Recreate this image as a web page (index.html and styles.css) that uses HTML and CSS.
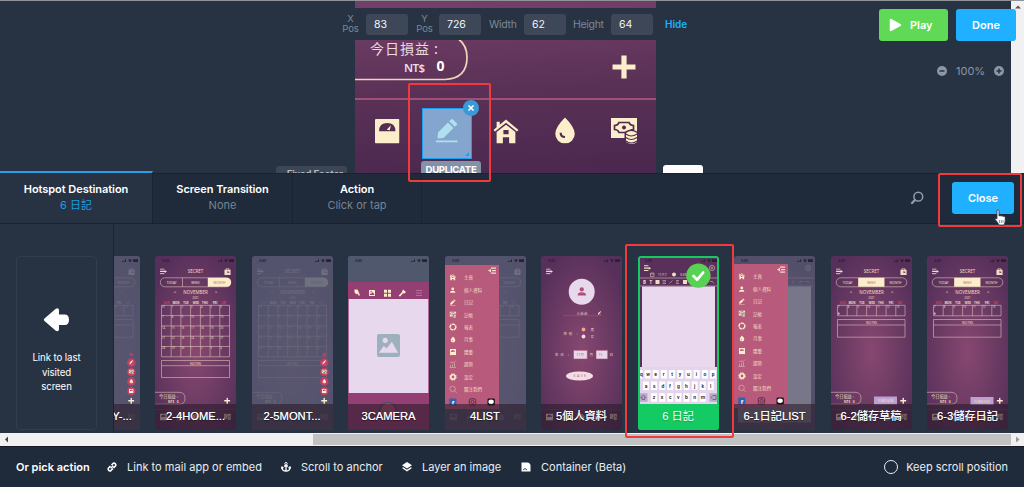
FILE: index.html
```html
<!DOCTYPE html>
<html lang="zh-Hant">
<head>
<meta charset="utf-8">
<title>Hotspot editor</title>
<link rel="stylesheet" href="styles.css">
</head>
<body>
<svg class="defs" width="0" height="0">
  <defs>
    <radialGradient id="plum" cx=".5" cy=".55" r=".62"><stop offset="0" stop-color="#874870"/><stop offset="1" stop-color="#56305a"/></radialGradient>
    <symbol id="i-plus" viewBox="0 0 24 24"><path d="M9.500 1h5v8.500H23v5h-8.500V23h-5v-8.500H1v-5h8.500z"/></symbol>
    <symbol id="i-scale" viewBox="0 0 24 24"><path fill-rule="evenodd" d="M1 0h22q1 0 1 1v22q0 1-1 1H1q-1 0-1-1V1q0-1 1-1zM4 12h16q0-8-8-8t-8 8zM11.500 10.500l4-4.500-1 5z"/></symbol>
    <symbol id="i-pencil" viewBox="0 0 24 24"><path d="M2.500 20l.5-6L13 4l5.500 5.500L8.500 19.500zM14.200 2.800L16 1q1-1 2 0l3.700 3.700q1 1 0 2L19.700 8.300zM1 22h21.500v2H1z"/></symbol>
    <symbol id="i-home" viewBox="0 0 24 24"><path fill-rule="evenodd" d="M3 3h3v3l6-5 12 10-1.500 1.500L12 4 1.500 12.500 0 11l3-2.500zM12 6l9 7v11h-6v-6H9v6H3V13zM9.500 11v4h5v-4z"/></symbol>
    <symbol id="i-drop" viewBox="0 0 24 24"><path fill-rule="evenodd" d="M12 0q9 9 9 15a9 9 0 0 1-18 0Q3 9 12 0zM7 14q0 5 5 5v-2q-3 0-3-3z"/></symbol>
    <symbol id="i-cash" viewBox="0 0 27 26"><path d="M0 0h26v20H0z"/><path d="M8 4.500h10q1 3 4.500 3v4q-3.500 0-4.500 3H8q-1-3-4.500-3v-4q3.500 0 4.500-3z" fill="none" stroke="#50294f" stroke-width="1.700"/><circle cx="13" cy="9.500" r="2" fill="#50294f"/><path d="M13.500 14q6-5 13.500 0v7H13.500z" fill="#50294f"/><path d="M15 15q5-4 11 0v9q-5 4-11 0z"/><path d="M15 16q5 4 11 0M15 19.500q5 4 11 0M15 23q5 4 11 0" fill="none" stroke="#50294f" stroke-width="1.200"/></symbol>
    <symbol id="i-menu" viewBox="0 0 16 14"><path d="M0 0h10v2.500H0zM0 5.500h11v2.500H0zM0 11h10v2.500H0zM11 3.500l5 3.500-5 3.500z"/></symbol>
    <symbol id="i-lock" viewBox="0 0 16 16"><path fill-rule="evenodd" d="M1 4h3V1h8v3h3v12H1zM6 2.500V4h4V2.500zM8 7v5l5-2.500z"/></symbol>
    <symbol id="i-person" viewBox="0 0 24 24"><circle cx="12" cy="6" r="6"/><path d="M0 23q0-9 12-9t12 9z"/></symbol>
    <symbol id="i-image" viewBox="0 0 24 24"><path fill-rule="evenodd" d="M2 0h20q2 0 2 2v20q0 2-2 2H2q-2 0-2-2V2q0-2 2-2zM8.500 4a2.800 2.800 0 1 0 .1 0zM2 19.500h20L15.500 8 10 15l-3-2.500z"/></symbol>

    <symbol id="status" viewBox="0 0 81 10"><g class="ink"><text x="7" y="6.300" class="t35">3:03</text><path d="M63 6V5h1v1zM64.500 6V4.500h1V6zM66 6V3.500h1V6zM69 3.500h4l-2 3zM74 3.300h5v2.700h-5z"/></g></symbol>

    <symbol id="header" viewBox="0 0 81 50">
      <use href="#i-menu" x="5" y="12.500" width="7" height="6"/>
      <text x="40.500" y="17.300" class="t45 mid">SECRET</text>
      <use href="#i-lock" x="69" y="12" width="7" height="7"/>
      <rect x="5.300" y="21.800" width="70.500" height="9" rx="4.500" class="line"/>
      <path class="line" d="M27.500 21.800v9M53 21.800v9"/>
      <text x="16.500" y="27.600" class="t32 mid">TODAY</text><text x="40.500" y="27.600" class="t32 mid">WEEK</text><text x="64.500" y="27.600" class="t32 mid">MONTH</text>
      <text x="20" y="38" class="t45 mid">&lt;</text><text x="40.500" y="38.200" class="t45 mid">NOVEMBER</text><text x="61" y="38" class="t45 mid">&gt;</text>
      <text x="40.500" y="42.500" class="t28 mid">2021</text>
      <g class="t25 bold mid"><text x="11.500" y="48" class="red">SUN</text><text x="21" y="48">MON</text><text x="31" y="48">TUE</text><text x="41" y="48">WED</text><text x="50" y="48">THU</text><text x="60" y="48">FRI</text><text x="69" y="48" class="red">SAT</text></g>
    </symbol>
    <symbol id="tail" viewBox="0 0 81 174">
      <path class="line" d="M0 136.300h24q6 0 6 6t-6 6H0"/>
      <text x="4" y="142" class="t42">今日損益 :</text><text x="13" y="146.600" class="t32 bold">NT$&#160;&#160; 0</text>
      <path d="M0 153.500h81" stroke="#8d416a" stroke-width=".6"/>
      <use href="#i-scale" x="5" y="157.500" width="7" height="7"/><use href="#i-pencil" x="21" y="157.500" width="7" height="7"/><use href="#i-home" x="37" y="157.500" width="7" height="7"/><use href="#i-drop" x="53" y="157.500" width="7" height="7"/><use href="#i-cash" x="69" y="157.500" width="7" height="7"/>
    </symbol>
    <symbol id="month" viewBox="0 0 81 174">
      <use href="#header" width="81" height="50"/>
      <path d="M53 21.800h18.500q4.500 0 4.500 4.500t-4.500 4.500H53z" class="on"/><text x="64.500" y="27.600" class="t32 mid pink">MONTH</text>
      <path class="line" d="M6.500 49.300h68v51.500h-68zM6.500 59.600h68M6.500 69.900h68M6.500 80.200h68M6.500 90.500h68M16.200 49.300v51.500M25.900 49.300v51.500M35.600 49.300v51.500M45.400 49.300v51.500M55.100 49.300v51.500M64.800 49.300v51.500M6.500 104.500h68v17h-68zM6.500 109.700h68"/>
      <g class="day"><text x="7" y="52">31</text><text x="16.700" y="52">1</text><text x="26.400" y="52">2</text><text x="36.100" y="52">3</text><text x="45.900" y="52">4</text><text x="55.600" y="52">5</text><text x="65.300" y="52">6</text>
      <text x="7" y="62.300">7</text><text x="16.700" y="62.300">8</text><text x="26.400" y="62.300">9</text><text x="36.100" y="62.300">10</text><text x="45.900" y="62.300">11</text><text x="55.600" y="62.300">12</text><text x="65.300" y="62.300">13</text>
      <text x="7" y="72.600">14</text><text x="16.700" y="72.600">15</text><text x="26.400" y="72.600">16</text><text x="36.100" y="72.600">17</text><text x="45.900" y="72.600">18</text><text x="55.600" y="72.600">19</text><text x="65.300" y="72.600">20</text>
      <text x="7" y="82.900">21</text><text x="16.700" y="82.900">22</text><text x="26.400" y="82.900">23</text><text x="36.100" y="82.900">24</text><text x="45.900" y="82.900">25</text><text x="55.600" y="82.900">26</text><text x="65.300" y="82.900">27</text>
      <text x="7" y="93.200">28</text><text x="16.700" y="93.200">29</text><text x="26.400" y="93.200">30</text><text x="36.100" y="93.200">1</text><text x="45.900" y="93.200">2</text><text x="55.600" y="93.200">3</text><text x="65.300" y="93.200">4</text></g>
      <text x="40.500" y="108.600" class="t35 mid">NOTES</text>
      <use href="#tail" width="81" height="174"/>
    </symbol>
    <symbol id="week" viewBox="0 0 81 174">
      <use href="#header" width="81" height="50"/>
      <path d="M27.300 21.800h26v9h-26z" class="on"/><text x="40.500" y="27.600" class="t32 mid pink">WEEK</text>
      <path class="line" d="M6.500 49.300h67.500v10.500h-67.500zM16.200 49.300v10.500M25.900 49.300v10.500M35.600 49.300v10.500M45.400 49.300v10.500M55.100 49.300v10.500M64.800 49.300v10.500M6.500 63.500h67.500v17.700h-67.500zM6.500 69h67.500"/>
      <g class="day"><text x="7" y="52.300">7</text><text x="16.700" y="52.300">8</text><text x="26.400" y="52.300">9</text><text x="36.100" y="52.300">10</text><text x="45.900" y="52.300">11</text><text x="55.600" y="52.300">12</text><text x="65.300" y="52.300">13</text></g>
      <path d="M7.300 56l1.700 1.700-1.700 1.200z"/>
      <text x="40.500" y="67.600" class="t35 mid">NOTES</text>
      <use href="#tail" width="81" height="174"/>
    </symbol>
    <symbol id="fabs" viewBox="0 0 81 174">
      <circle cx="72.300" cy="98.500" r="2" fill="#a84468"/>
      <g fill="#c13f64"><circle cx="72.300" cy="106.500" r="4.300"/><circle cx="72.300" cy="116" r="4.300"/><circle cx="72.300" cy="125.500" r="4.300"/><circle cx="72.300" cy="135" r="4.300"/></g>
      <g class="cream"><use href="#i-pencil" x="70" y="104" width="4.600" height="4.600"/><use href="#i-cash" x="69.500" y="113.500" width="5.500" height="5"/><use href="#i-drop" x="70" y="123" width="4.600" height="4.600"/><use href="#i-scale" x="70" y="132.700" width="4.600" height="4.600"/>
      <use href="#i-plus" x="69" y="141.500" width="6.500" height="6.500"/></g>
    </symbol>
    <symbol id="menu" viewBox="0 0 81 174">
      <path d="M0 9h54v144H0z" fill="#b85a7c"/>
      <path d="M46 11.500h5v1.300h-5zM47 14h4v1.300h-4zM46 16.500h5v1.300h-5zM43 14.600l3-1.800v3.600z"/>
      <g class="cream"><use href="#i-home" x="4.500" y="18" width="6.500" height="6.500"/><use href="#i-person" x="5" y="31" width="5.500" height="6.500"/><use href="#i-pencil" x="4.500" y="43.300" width="6.500" height="6.500"/><use href="#i-cash" x="4.500" y="55.500" width="7" height="6.500"/>
      <use href="#i-drop" x="5" y="80.200" width="6" height="6.500"/><use href="#i-scale" x="4.800" y="93" width="6.200" height="6.200"/></g>
      <circle cx="8" cy="71" r="2.900" fill="none" stroke="#fdeecb" stroke-width="1.400" stroke-dasharray="3.500 .5"/>
      <path d="M4.500 111.500h6.500M5.500 111v-2M7.500 111v-3M9.500 111v-4M5 107l2-1 2 .5 2-2" class="line"/>
      <circle cx="8" cy="121" r="2.200" fill="none" stroke="#fdeecb" stroke-width="1.600"/><circle cx="8" cy="121" r="3.300" fill="none" stroke="#fdeecb" stroke-width="1" stroke-dasharray="1.300 1.300"/>
      <path d="M9.600 134.800l2 2" class="line"/><circle cx="7.600" cy="132.800" r="2.700" class="line"/>
      <g class="t45"><text x="19" y="23.200">主頁</text><text x="19" y="35.700">個人資料</text><text x="19" y="48.200">日記</text><text x="19" y="60.500">記帳</text><text x="19" y="73">報表</text><text x="19" y="85.400">月事</text><text x="19" y="98">體重</text><text x="19" y="110.400">趨勢</text><text x="19" y="123">設定</text><text x="19" y="135.300">關注我們</text></g>
      <rect x="4.300" y="142.500" width="7" height="7" fill="#2d63b4"/><text x="6.700" y="148.500" class="t6 white">f</text>
      <rect x="24.300" y="142.800" width="6.400" height="6.400" rx="1.600" fill="none" stroke="#532844" stroke-width=".9"/><circle cx="27.500" cy="146" r="1.600" fill="none" stroke="#532844" stroke-width=".8"/>
      <rect x="42.500" y="142.500" width="7.300" height="7" rx="1.200" fill="#121113"/><ellipse cx="46.100" cy="145.800" rx="2.700" ry="2.200" fill="#fff"/>
    </symbol>
    <symbol id="editor" viewBox="0 0 81 174">
      <use href="#i-menu" x="6" y="9" width="7" height="6.500"/>
      <circle cx="74" cy="12" r="2.700" class="line"/><circle cx="74" cy="12" r="1" class="line"/>
      <path class="line" d="M12.500 17h3.500v3.500h-3.500zM12.500 18h3.500"/><text x="20" y="20" class="t32">11/17</text><circle cx="36" cy="18.500" r="2"/><text x="42" y="20" class="t32">3:03</text>
      <path class="line" d="M2 22h77M2 30h77"/>
      <g class="t45 bold"><text x="5" y="27.700">B</text><text x="11.500" y="27.700">T</text></g><rect x="17.500" y="24" width="4" height="4"/><path class="line" d="M24.500 24.500h3.500M24.500 26h3.500M24.500 27.500h3.500M31.500 27.500l3-3M38 24.500h3M38 26h2.500M38 27.500h3M59 24.500v3M65 27.500q1-3 4-2M76 27.500q-1-3-4-2"/><rect x="45" y="24" width="4" height="4"/>
    </symbol>
    <symbol id="veil" viewBox="0 0 81 174"><path d="M0 0h81v174H0z" fill="#525970" opacity=".84"/></symbol>
  </defs>
</svg>

<div class="app">
  <section class="stage">
    <div class="pane-left"><button class="footer-btn">+Fixed Footer</button></div>
    <svg class="phone" viewBox="355 0 301 173" width="301" height="173">
      <defs><linearGradient id="screen" x1=".6" y1="0" x2=".7" y2="1"><stop offset="0" stop-color="#733f68"/><stop offset=".5" stop-color="#5a3156"/><stop offset="1" stop-color="#4b284f"/></linearGradient></defs>
      <path d="M355 0h301v173H355z" fill="url(#screen)"/>
      <path d="M355 79.500h90q22-1 22-22 0-12-8-18" fill="none" stroke="#ead7b9" stroke-width="1.700"/>
      <text x="370" y="54" class="profit" textLength="68">今日損益 :</text>
      <text x="404" y="71.500" class="cash" textLength="21">NT$</text><text x="436.500" y="70.500" class="zero">0</text>
      <path d="M355 99h301" stroke="#a14e79" stroke-width="2"/>
      <g class="cream"><use href="#i-plus" x="611" y="54.500" width="26" height="25"/><use href="#i-scale" x="375" y="119" width="24.500" height="24.500"/><use href="#i-home" x="492.500" y="118.500" width="27" height="25"/><use href="#i-drop" x="551.500" y="117.500" width="27" height="26"/><use href="#i-cash" x="611" y="118" width="27" height="26"/></g>
    </svg>
    <div class="pane-right"><div class="white-btn"></div></div>
    <div class="vscroll"><svg width="13" height="13"><path d="M4 8.500L7 5.500l3 3z" fill="#555"/></svg></div>
    <div class="toolbar">
      <span class="pos">X<br>Pos</span><span class="field">83</span>
      <span class="pos py">Y<br>Pos</span><span class="field">726</span>
      <span class="dim dw">Width</span><span class="field">62</span>
      <span class="dim dh">Height</span><span class="field">64</span>
      <span class="hide">Hide</span>
    </div>
    <div class="hotspot"><svg width="24" height="26" viewBox="0 0 24 25"><use href="#i-pencil" width="24" height="24" fill="#b2dff0"/></svg><span class="x"><svg width="8" height="8"><path d="M1.500 1.500l5 5M6.500 1.500l-5 5" stroke="#fff" stroke-width="1.700"/></svg></span><i class="grip"></i></div>
    <div class="duplicate">DUPLICATE</div>
    <div class="actions"><button class="btn play"><svg width="13" height="14"><path d="M1.500 1.500v11L11.500 7z" fill="#fff" stroke="#fff" stroke-width="1.500" stroke-linejoin="round"/></svg>Play</button><button class="btn">Done</button></div>
    <div class="zoom"><svg width="10" height="10"><circle cx="5" cy="5" r="5"/><path d="M2.500 5h5" class="cut"/></svg>100%<svg width="10" height="10"><circle cx="5" cy="5" r="5"/><path d="M2.500 5h5M5 2.500v5" class="cut"/></svg></div>
  </section>

  <nav class="tabs">
    <div class="tab active"><b>Hotspot Destination</b><span>6 日記</span></div>
    <div class="tab second"><b>Screen Transition</b><span>None</span></div>
    <div class="tab third"><b>Action</b><span>Click or tap</span></div>
    <svg class="search" width="14" height="14"><circle cx="8.300" cy="5.700" r="4.400" fill="none" stroke="#929daf" stroke-width="1.500"/><path d="M5 9l-3 3" stroke="#929daf" stroke-width="2.300" stroke-linecap="round"/></svg>
    <button class="btn close">Close</button>
  </nav>

  <main class="strip">
    <aside class="last"><div class="last-card"><svg width="27" height="26"><path d="M1.500 11.500L12.500 2q3-2 3.500 1v4.500h5.500q4.500 0 4.500 5.300t-4.500 5.200H16v4.500q-.5 3-3.500 1L1.500 14q-1.500-1.200 0-2.500z" fill="#fff"/></svg><p>Link to last<br>visited<br>screen</p></div></aside>
    <div class="thumbs">
      <figure class="thumb"><svg viewBox="0 0 81 174"><path d="M0 0h81v174H0z" fill="url(#plum)"/><use href="#week"/><use href="#veil"/><use href="#status" width="81" height="10"/><use href="#fabs"/></svg><figcaption>2-3TODAY-...</figcaption></figure>
      <figure class="thumb"><svg viewBox="0 0 81 174"><path d="M0 0h81v174H0z" fill="url(#plum)"/><use href="#month"/><use href="#status" width="81" height="10"/><use href="#i-plus" class="cream" x="69" y="141.500" width="6.500" height="6.500"/></svg><figcaption>2-4HOME...</figcaption></figure>
      <figure class="thumb"><svg viewBox="0 0 81 174"><path d="M0 0h81v174H0z" fill="url(#plum)"/><use href="#month"/><use href="#veil"/><use href="#status" width="81" height="10"/><use href="#fabs"/></svg><figcaption>2-5MONT...</figcaption></figure>
      <figure class="thumb"><svg viewBox="0 0 81 174"><path d="M0 0h81v174H0z" fill="#943f73"/><path d="M0 0h81v26H0z" fill="#50586e"/><use href="#status" width="81" height="10"/><path d="M.7 43h79.600v94H.7z" fill="#e8d8ee"/>
        <g class="cream"><path d="M6.500 33.500h3l1 2 1.500 4h-1.500l-1-2-1 1-2-2z"/><use href="#i-image" x="20.500" y="34" width="7" height="6"/><path d="M36 33.700h3v3h-3zM40 33.700h3v3h-3zM36 37.700h3v3h-3zM40 37.700h3v3h-3zM55 33.500l3 2.500-1.500 1.500-1.500-.2-3 3.500-1.300-1.300 3-3z"/></g><path d="M68 34.500h6M68 37h6M68 39.500h6" stroke="#ba7e9b" stroke-width=".8"/>
        <use href="#i-image" x="29" y="78" width="23" height="23" fill="#9eafbd"/><circle cx="40" cy="154.500" r="8" fill="#bf5076" stroke="#3f5367" stroke-width="1.500"/></svg><figcaption>3CAMERA</figcaption></figure>
      <figure class="thumb"><svg viewBox="0 0 81 174"><path d="M0 0h81v174H0z" fill="url(#plum)"/><use href="#week"/><use href="#veil"/><use href="#status" width="81" height="10"/><use href="#menu"/></svg><figcaption>4LIST</figcaption></figure>
      <figure class="thumb"><svg viewBox="0 0 81 174"><path d="M0 0h81v174H0z" fill="url(#plum)"/><use href="#status" width="81" height="10"/><use href="#i-menu" x="5" y="12.500" width="7" height="6"/>
        <circle cx="40.700" cy="35.700" r="13" fill="#e8d8ec"/><use href="#i-person" x="36.500" y="31" width="8.500" height="9" fill="#b34f76"/>
        <text x="35.500" y="58.600" class="t35" textLength="11">小米米</text><path d="M22 59.700h38" stroke="#b84b70" stroke-width=".6"/><use href="#i-pencil" x="56.500" y="55" width="4" height="4"/>
        <text x="22.500" y="78.600" class="t35" textLength="14">性別 :</text><circle cx="42.500" cy="73.500" r="1.900" fill="#f2a591"/><circle cx="42.500" cy="80.500" r="1.900" fill="#f6d8e6"/><text x="49.500" y="74.800" class="t35">男</text><text x="49.500" y="81.800" class="t35">女</text>
        <text x="14" y="99.800" class="t35" textLength="14">生日 :</text><path d="M32.500 94.300H46.300v8.700H32.500zM55 94.300h11.700v8.700H55z" fill="#e8d8ec" stroke="#a9476c" stroke-width=".6"/><text x="35.500" y="99.900" class="t35 pink">11月</text><text x="57.500" y="99.900" class="t35 pink">15</text><text x="48.500" y="99.800" class="t35">月</text><text x="68.500" y="99.800" class="t35">日</text>
        <ellipse cx="38.500" cy="120" rx="13.500" ry="4.500" fill="#f2dfe6"/><text x="32.500" y="121.400" class="t35 pink" textLength="12.500">SAVE</text>
        <path d="M0 153.500h81" stroke="#8d416a" stroke-width=".6"/><use href="#i-scale" x="5" y="157.500" width="7" height="7"/><use href="#i-pencil" x="21" y="157.500" width="7" height="7"/><use href="#i-home" x="37" y="157.500" width="7" height="7"/><use href="#i-drop" x="53" y="157.500" width="7" height="7"/><use href="#i-cash" x="69" y="157.500" width="7" height="7"/></svg><figcaption>5個人資料</figcaption></figure>
      <figure class="thumb selected"><svg viewBox="0 0 81 174"><path d="M0 0h81v174H0z" fill="#58305a"/><use href="#status" width="81" height="10"/><use href="#editor"/>
        <path d="M4 30.500h73V111H4z" fill="#e9d8ee"/><path d="M2 111h77v38H2z" fill="#e4d5ec"/>
        <path d="M2 114h2.500v8.500H2zM6.500 114h6v8.500h-6zM14.700 114h6v8.500h-6zM22.900 114h6v8.500h-6zM31.100 114h6v8.500h-6zM39.300 114h6v8.500h-6zM47.500 114h6v8.500h-6zM55.700 114h6v8.500h-6zM63.900 114h6v8.500h-6zM72.100 114h6v8.500h-6zM5 125.500h6v8.500H5zM13.100 125.500h6v8.500h-6zM21.200 125.500h6v8.500h-6zM29.300 125.500h6v8.500h-6zM37.400 125.500h6v8.500h-6zM45.500 125.500h6v8.500h-6zM53.600 125.500h6v8.500h-6zM61.700 125.500h6v8.500h-6zM69.800 125.500h6v8.500h-6zM13 137.200h6v8.500h-6zM21.200 137.200h6v8.500h-6zM29.300 137.200h6v8.500h-6zM37.400 137.200h6v8.500h-6zM45.500 137.200h6v8.500h-6zM53.600 137.200h6v8.500h-6zM61.700 137.200h6v8.500h-6z" fill="#fff"/>
        <path d="M2 137.200h7.500v8.500H2zM71.500 137.200H79v8.500h-7.500z" fill="#b9a9c8"/><path d="M5.300 139l2.500 2.500H6.500v2h-2.400v-2H2.800zM73 141.500l2-2h3v4h-3z" fill="none" stroke="#54405f" stroke-width=".6"/>
        <g class="key"><text x="2 8.200 16.200 24.800 33.200 40.700 48.900 57.800 65.500 73.700" y="120">qwertyuiop</text><text x="6.700 14.900 23.400 30.900 38.900 47.100 56 63.500 72" y="131.500">asdfghjkl</text><text x="14.800 22.800 31 39 47 55.200 62.700" y="143">zxcvbnm</text></g>
        <rect x="1" y="1" width="79" height="172" rx="1" fill="none" stroke="#14cb63" stroke-width="2"/>
        <circle cx="60.400" cy="19.600" r="12.200" fill="#57d253"/><path d="M55.500 20l3.700 3.700 6-7.200" fill="none" stroke="#fff" stroke-width="2.700" stroke-linecap="round" stroke-linejoin="round"/></svg><figcaption>6 日記</figcaption></figure>
      <figure class="thumb"><svg viewBox="0 0 81 174"><path d="M0 0h81v174H0z" fill="url(#plum)"/><use href="#editor"/><path d="M0 0h81v174H0z" fill="#525970" opacity=".75"/><path d="M4 30.500h73v136H4z" fill="#777789"/><use href="#status" width="81" height="10"/><use href="#menu" y="-1"/></svg><figcaption>6-1日記LIST</figcaption></figure>
      <figure class="thumb"><svg viewBox="0 0 81 174"><path d="M0 0h81v174H0z" fill="url(#plum)"/><use href="#week"/><use href="#status" width="81" height="10"/><use href="#i-plus" class="cream" x="69" y="141.500" width="6.500" height="6.500"/><path d="M43 140.500h23v8H43z" fill="#bba0d1"/><text x="54.500" y="146" class="t32 mid">已儲存草稿</text></svg><figcaption>6-2儲存草稿</figcaption></figure>
      <figure class="thumb"><svg viewBox="0 0 81 174"><path d="M0 0h81v174H0z" fill="url(#plum)"/><use href="#week"/><use href="#status" width="81" height="10"/><use href="#i-plus" class="cream" x="69.500" y="141.500" width="6.500" height="6.500"/><path d="M43.500 141h23v8h-23z" fill="#bba0d1"/><text x="55" y="146.500" class="t32 mid">已儲存日記</text></svg><figcaption>6-3儲存日記</figcaption></figure>
    </div>
  </main>

  <div class="hscroll"><svg width="13" height="11"><path d="M8 2.500v6l-3-3z" fill="#444"/></svg><div class="bar"></div><svg width="13" height="11"><path d="M5 2.500v6l3.500-3z" fill="#999"/></svg></div>

  <footer class="picker">
    <b>Or pick action</b>
    <span class="pick p1"><svg width="10" height="10"><path d="M4.500 3l1.500-1.500q1.200-.9 2.300.2 1 1.200.1 2.300L6.500 6M6 6.500L4 8.500Q2.800 9.300 1.700 8.300q-1-1.200-.1-2.300L3.500 4M3.700 6.300L6.300 3.700" fill="none" stroke="#fff" stroke-width="1.600"/></svg>Link to mail app or embed</span>
    <span class="pick p2"><svg width="10" height="10"><path d="M5 3v6M3 4h4M1 5.500q0 3.500 4 3.500t4-3.500M.3 6.700L1 5l1.500 1M9.700 6.700L9 5 7.500 6" fill="none" stroke="#fff" stroke-width="1.300"/><circle cx="5" cy="1.700" r="1.200" fill="none" stroke="#fff"/></svg>Scroll to anchor</span>
    <span class="pick p3"><svg width="10" height="10"><path d="M5 0l5 3.200-5 3.200-5-3.200zM0 6l1.200-.8L5 7.700l3.800-2.500L10 6 5 9.500z" fill="#fff"/></svg>Layer an image</span>
    <span class="pick p4"><svg width="10" height="10"><path d="M.5.500h9v9h-9z" fill="#fff"/><path d="M2 8l2-1.500L6 8" fill="none" stroke="#202b3a" stroke-width=".9"/><path d="M7 0h3v3z" fill="#202b3a"/></svg>Container (Beta)</span>
    <span class="keep"><i></i>Keep scroll position</span>
  </footer>

  <div class="mark mark-hotspot"></div><div class="mark mark-close"></div><div class="mark mark-thumb"></div>
  <svg class="cursor" width="12" height="17" viewBox="0 0 12 17"><path d="M3 1q1.500-.8 2 .8V7q1-1 2 0 1-.7 2 .3 2-.4 2.200 1V12q-.2 2-1.200 4H5q-1-2.500-3.800-5.500-.4-1.700 1.800-.8z" fill="#fff" stroke="#273343" stroke-width=".8"/><path d="M5.500 11v3M7.300 11v3M9 11v3" stroke="#273343" stroke-width=".5"/></svg>
</div>
</body>
</html>
```
FILE: styles.css
```css
* { box-sizing: border-box; }
body { margin: 0; background: #273343; font-family: Inter, "Noto Sans CJK TC", sans-serif; font-size: 11px; color: #e8edf2; }
.defs { position: absolute; }
button { font: inherit; border: 0; padding: 0; }
svg { flex: none; display: block; }
.app { position: relative; width: 1024px; height: 487px; display: flex; flex-direction: column; overflow: hidden; }

.stage { position: relative; height: 173px; display: grid; grid-template-columns: 355px 301px 1fr 13px; overflow: hidden; }
.stage::after { content: ""; position: absolute; inset: 0 0 auto; height: 1px; background: #909499; }
.pane-left { padding: 166px 8px 0 276px; }
.footer-btn { width: 71px; height: 17px; border-radius: 3px; background: #3c4656; color: #b5bcc6; font-size: 10px; font-weight: 600; line-height: 17px; display: block; white-space: nowrap; letter-spacing: -.3px; }
.pane-right { padding: 165px 0 0 7px; }
.white-btn { width: 40px; height: 20px; border-radius: 3px; background: #fff; }
.vscroll { background: #f1f1f1; }
.cream { fill: #fdeecb; }
.profit { font: 400 14px "Noto Sans CJK TC", sans-serif; fill: #e9dbe0; }
.cash { font: 600 11.500px "Noto Sans", sans-serif; fill: #e9dce4; }
.zero { font: 700 14px "Noto Sans", sans-serif; fill: #fff; }

.toolbar { position: absolute; left: 0; right: 13px; top: 8px; height: 32px; padding: 0 0 0 342px; display: flex; align-items: center; background: #273343; color: #7d8795; font-size: 10px; }
.pos { width: 17px; text-align: center; line-height: 10px; font-size: 9.500px; margin-right: 7px; }
.py { margin-left: 8px; margin-right: 6px; }
.field { width: 42px; height: 21px; line-height: 21px; padding-left: 8px; border-radius: 3px; background: #3d4757; color: #f3f5f8; font-size: 10.500px; }
.dim { font-size: 10.500px; letter-spacing: -.3px; white-space: nowrap; }
.dw { width: 35px; margin-left: 8px; }
.dh { width: 38px; margin-left: 7px; }
.hide { margin-left: 12px; color: #1fb1ff; font-weight: 600; }

.hotspot { position: absolute; left: 421.500px; top: 108px; width: 50px; height: 51px; border: 1.500px solid #1d9ff0; background: #84a5ce; display: flex; justify-content: center; padding-top: 9px; }
.hotspot .x { position: absolute; right: -8px; top: -9px; width: 16px; height: 16px; border-radius: 50%; background: #3a9ad6; display: flex; align-items: center; justify-content: center; }
.grip { position: absolute; right: 2px; bottom: 2px; border: 2px solid #1d9ff0; border-left-color: transparent; border-top-color: transparent; }
.duplicate { position: absolute; left: 421px; top: 161px; width: 60px; height: 20px; border-radius: 3px; background: #8292a8; color: #fff; font-weight: 700; font-size: 9.600px; line-height: 17px; text-align: center; letter-spacing: -.3px; }
.actions { position: absolute; right: 8px; top: 9px; display: flex; gap: 8px; }
.btn { width: 60px; height: 32px; border-radius: 3px; background: #1fb1ff; color: #fff; font-weight: 600; }
.play { width: 69px; background: #5fd956; display: flex; align-items: center; gap: 8px; padding-left: 10px; }
.zoom { position: absolute; left: 937px; top: 64px; height: 14px; display: flex; align-items: center; gap: 9px; color: #8b96a6; fill: #8b96a6; }
.cut { stroke: #273343; stroke-width: 1.500; }

.tabs { height: 51px; background: #1f2b3a; border-top: 1px solid #1a222d; border-bottom: 1px solid #1a222d; display: flex; }
.tab { width: 140px; border-right: 1px solid #1a2430; text-align: center; padding-top: 7px; display: flex; flex-direction: column; line-height: 16px; }
.tab b { font-weight: 600; color: #fff; letter-spacing: -.05px; }
.tab span { color: #768295; }
.active { width: 153px; background: #273343; margin-top: -3px; border-top: 2px solid #2a9fe6; padding-top: 8px; position: relative; }
.active span { color: #1f9be0; }
.third { width: 129px; }
.search { margin: 17px 0 0 488px; }
.close { width: 62px; margin: 8px 0 0 28px; }

.strip { height: 209px; display: flex; }
.last { width: 114px; padding: 32px 17px 0 16px; border-right: 1px solid #1b2430; }
.last-card { width: 81px; height: 174px; border: 1px solid #323d4d; border-radius: 4px; display: flex; flex-direction: column; align-items: center; padding-top: 50px; }
.last-card p { margin: 18px 0 0; text-align: center; font-size: 9.700px; line-height: 14.500px; color: #fff; letter-spacing: -.1px; }
.thumbs { flex: 1; display: flex; gap: 15.500px; padding-top: 32px; overflow: hidden; }
.thumb { position: relative; flex: none; width: 81px; height: 174px; margin: 0; border-radius: 3px; overflow: hidden; fill: #f0dcc4; font-family: "Noto Sans", "Noto Sans CJK TC", sans-serif; }
.thumb:first-child { margin-left: -55.500px; }
.thumb > svg { width: 81px; height: 174px; }
.thumb figcaption { position: absolute; left: 0; right: 0; bottom: 0; height: 26px; text-align: center; background: rgba(40, 25, 40, .58); color: #fff; font: 11.200px/24px "Liberation Sans", "Noto Sans CJK TC", sans-serif; white-space: nowrap; text-shadow: 0 1px 1px #0008, 0 0 .5px #fff; }
.selected figcaption { background: #14cb63; text-shadow: 0 1px 1px #0003; }
.line { fill: none; stroke: #dcc0b5; stroke-width: .6; }
.on { fill: #fdeecb; }
.mid { text-anchor: middle; }
.bold { font-weight: 700; }
.day { font-size: 2.600px; }
.t25 { font-size: 2.800px; }
.t28 { font-size: 2.800px; }
.t32 { font-size: 3.200px; }
.t35 { font-size: 3.500px; }
.t42 { font-size: 4.200px; }
.t45 { font-size: 4.500px; }
.t6 { font-size: 6px; font-weight: 700; }
.white { fill: #fff; }
.red { fill: #d23c58; }
.pink { fill: #c46a78; }
.ink { fill: #252234; font-weight: 700; }
.key { font: 600 5px Roboto, sans-serif; fill: #252127; }

.hscroll { height: 13px; background: #f1f1f1; display: flex; align-items: center; }
.bar { flex: 1; height: 11px; margin-left: 300px; background: #c1c1c1; }
.picker { flex: 1; background: #1f2b3a; border-top: 1px solid #151b24; display: flex; align-items: center; padding: 0 16px; }
.picker b { font-weight: 600; width: 91px; color: #fff; white-space: nowrap; letter-spacing: 0; }
.pick { display: flex; align-items: center; gap: 10px; white-space: nowrap; }
.p1 { width: 174px; letter-spacing: .02px; }
.p2 { width: 121px; }
.p3 { width: 119px; }
.keep { margin-left: auto; display: flex; align-items: center; gap: 8px; }
.keep i { width: 14px; height: 14px; border: 1.500px solid #e8edf2; border-radius: 50%; }

.mark { position: absolute; border: 2px solid #ef3b3b; border-radius: 2px; }
.mark-hotspot { left: 408px; top: 83px; width: 83px; height: 99px; }
.mark-close { left: 938px; top: 173px; width: 84px; height: 54px; }
.mark-thumb { left: 625px; top: 244px; width: 109px; height: 194px; }
.cursor { position: absolute; left: 994px; top: 209px; }
```
